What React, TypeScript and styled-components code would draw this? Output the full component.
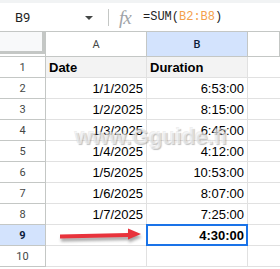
import React from "react";
import styled, { createGlobalStyle, css } from "styled-components";

const GlobalStyle = createGlobalStyle`
  html, body { margin: 0; padding: 0; background: #fff; }
  body { width: 280px; height: 269px; overflow: hidden; }
`;

const Sheet = styled.div`
  position: relative;
  width: 280px;
  height: 269px;
  overflow: hidden;
  background: #fff;
  font-family: "Liberation Sans", Arial, sans-serif;
`;

const FormulaBar = styled.div`
  display: flex;
  align-items: center;
  height: 28px;
  border-top: 3px solid #f1f3f4;
  border-bottom: 1px solid #c4c7c5;
  box-sizing: content-box;
`;

const NameBox = styled.div`
  display: flex;
  align-items: center;
  justify-content: space-between;
  width: 78px;
  padding: 0 15px 0 15px;
  font-family: Roboto, "Liberation Sans", sans-serif;
  font-size: 13px;
  color: #1f1f1f;
`;

const Caret = styled.span`
  width: 0;
  height: 0;
  border-left: 4px solid transparent;
  border-right: 4px solid transparent;
  border-top: 4px solid #444746;
  margin-top: 1px;
`;

const Divider = styled.span`
  width: 1px;
  height: 17px;
  background: #c4c7c5;
`;

const Fx = styled.span`
  margin-left: 10px;
  width: 22px;
  font-family: "Liberation Serif", serif;
  font-style: italic;
  font-size: 19px;
  line-height: 1;
  color: #a0a4a8;
  letter-spacing: -1px;
`;

const Formula = styled.span`
  margin-left: 2px;
  font-family: "Liberation Mono", monospace;
  font-size: 12px;
  color: #1f1f1f;
`;

const Ref = styled.span`
  color: #f4a04b;
`;

const Grid = styled.div`
  display: grid;
  grid-template-columns: 46px 101px 101px 1fr;
  grid-template-rows: 25px;
  grid-auto-rows: 21px;
`;

const cellBase = css`
  box-sizing: border-box;
  border-right: 1px solid #e1e1e1;
  border-bottom: 1px solid #e1e1e1;
  display: flex;
  align-items: center;
`;

const Corner = styled.div`
  box-sizing: border-box;
  border-bottom: 1px solid #c4c7c5;
  border-right: 1px solid #c4c7c5;
  padding-bottom: 1px;
`;

const CornerFill = styled.div`
  height: 22px;
  width: 45px;
  box-sizing: border-box;
  background: #f8f9fa;
  border-right: 3px solid #c4c7c5;
  border-bottom: 3px solid #c4c7c5;
`;

const ColHeader = styled.div<{ $selected?: boolean }>`
  ${cellBase};
  justify-content: center;
  border-right-color: #c4c7c5;
  border-bottom-color: #c4c7c5;
  background: ${(p) => (p.$selected ? "#d3e3fd" : "#fff")};
  font-family: Roboto, "Liberation Sans", sans-serif;
  font-size: 11px;
  color: ${(p) => (p.$selected ? "#0b1c3a" : "#444746")};
  font-weight: ${(p) => (p.$selected ? 500 : 400)};
  padding-top: 1px;
`;

const RowHeader = styled.div<{ $selected?: boolean }>`
  ${cellBase};
  justify-content: center;
  border-right-color: #c4c7c5;
  border-bottom-color: #c4c7c5;
  background: ${(p) => (p.$selected ? "#d3e3fd" : "#fff")};
  font-family: Roboto, "Liberation Sans", sans-serif;
  font-size: 11px;
  color: ${(p) => (p.$selected ? "#0b1c3a" : "#444746")};
  font-weight: ${(p) => (p.$selected ? 700 : 400)};
`;

const Cell = styled.div<{ $align?: "left" | "right"; $bold?: boolean; $head?: boolean; $active?: boolean }>`
  ${cellBase};
  position: relative;
  justify-content: ${(p) => (p.$align === "right" ? "flex-end" : "flex-start")};
  padding: 1px 3px 0 3px;
  font-size: 13px;
  color: #000;
  font-weight: ${(p) => (p.$bold ? 700 : 400)};
  background: ${(p) => (p.$head ? "#f3f3f3" : "#fff")};
  ${(p) =>
    p.$active &&
    css`
      &::after {
        content: "";
        position: absolute;
        left: -1px;
        top: -1px;
        right: -1px;
        bottom: -1px;
        border: 2px solid #1a73e8;
      }
    `}
`;

const EmptyCell = styled.div`
  ${cellBase};
  border-right: none;
`;

const Overlay = styled.svg`
  position: absolute;
  left: 0;
  top: 0;
  pointer-events: none;
`;

const Watermark = styled.div`
  position: absolute;
  left: 75px;
  top: 124px;
  font-family: "Liberation Sans", Arial, sans-serif;
  font-weight: 700;
  font-size: 22px;
  color: rgba(255, 255, 255, 0.55);
  text-shadow: 1px 1px 1px rgba(120, 120, 120, 0.45), -1px -1px 0 rgba(200, 200, 200, 0.3);
  pointer-events: none;
  white-space: nowrap;
`;

const rows: [string, string][] = [
  ["1/1/2025", "6:53:00"],
  ["1/2/2025", "8:15:00"],
  ["1/3/2025", "6:45:00"],
  ["1/4/2025", "4:12:00"],
  ["1/5/2025", "10:53:00"],
  ["1/6/2025", "8:07:00"],
  ["1/7/2025", "7:25:00"],
];

export default function App() {
  return (
    <Sheet>
      <GlobalStyle />
      <FormulaBar>
        <NameBox>
          <span>B9</span>
          <Caret />
        </NameBox>
        <Divider />
        <Fx>fx</Fx>
        <Formula>
          =SUM(<Ref>B2:B8</Ref>)
        </Formula>
      </FormulaBar>
      <Grid>
        <Corner>
          <CornerFill />
        </Corner>
        <ColHeader>A</ColHeader>
        <ColHeader $selected>B</ColHeader>
        <ColHeader />

        <RowHeader>1</RowHeader>
        <Cell $bold $head>Date</Cell>
        <Cell $bold $head>Duration</Cell>
        <EmptyCell />

        {rows.map(([d, t], i) => (
          <React.Fragment key={d}>
            <RowHeader>{i + 2}</RowHeader>
            <Cell $align="right">{d}</Cell>
            <Cell $align="right">{t}</Cell>
            <EmptyCell />
          </React.Fragment>
        ))}

        <RowHeader $selected>9</RowHeader>
        <Cell />
        <Cell $align="right" $bold $active>4:30:00</Cell>
        <EmptyCell />

        <RowHeader>10</RowHeader>
        <Cell />
        <Cell />
        <EmptyCell />
      </Grid>
      <Watermark>www.Gguide.fi</Watermark>
      <Overlay width="280" height="269" viewBox="0 0 280 269">
        <defs>
          <filter id="sh" x="-20%" y="-100%" width="140%" height="300%">
            <feGaussianBlur stdDeviation="1.5" />
          </filter>
        </defs>
        <g transform="translate(1,3)" filter="url(#sh)" fill="rgba(0,0,0,0.35)">
          <polygon points="60,234.5 128,233 128,228.5 141,234 128,239.5 128,237 60,238.5" />
        </g>
        <polygon
          points="60,234.5 128,233 128,228.5 141,234 128,239.5 128,237 60,238.5"
          fill="#e8333c"
        />
      </Overlay>
    </Sheet>
  );
}
